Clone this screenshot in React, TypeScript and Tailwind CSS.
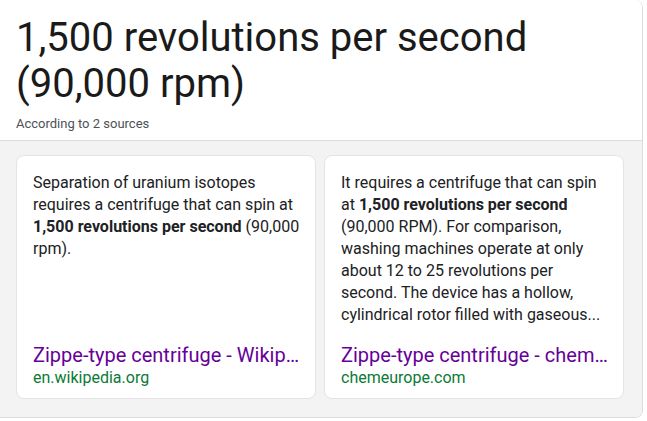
type Source = {
  id: string;
  before: string;
  bold: string;
  after: string;
  title: string;
  domain: string;
};

const sources: Source[] = [
  {
    id: "wiki",
    before: "Separation of uranium isotopes requires a centrifuge that can spin at ",
    bold: "1,500 revolutions per second",
    after: " (90,000 rpm).",
    title: "Zippe-type centrifuge - Wikipedia",
    domain: "en.wikipedia.org",
  },
  {
    id: "chem",
    before: "It requires a centrifuge that can spin at ",
    bold: "1,500 revolutions per second",
    after:
      " (90,000 RPM). For comparison, washing machines operate at only about 12 to 25 revolutions per second. The device has a hollow, cylindrical rotor filled with gaseous...",
    title: "Zippe-type centrifuge - chemeurope.com",
    domain: "chemeurope.com",
  },
];

function SourceCard({ source }: { source: Source }) {
  return (
    <a
      href="#"
      className="flex w-[300px] shrink-0 flex-col rounded-lg border border-[#e4e4e4] bg-white pb-[10px] pl-4 pr-3 pt-4"
    >
      <p className="text-[16px] leading-[22px] text-[#202124]">
        {source.before}
        <b className="font-bold">{source.bold}</b>
        {source.after}
      </p>
      <div className="mt-auto">
        <div className="truncate text-[20px] leading-[26px] text-[#660099]">{source.title}</div>
        <div className="text-[16px] leading-5 text-[#0a7a35]">{source.domain}</div>
      </div>
    </a>
  );
}

export default function App() {
  return (
    <div className="h-[421px] w-[647px] bg-white font-['Roboto',sans-serif]">
      <section className="w-[643px] overflow-hidden rounded-r-lg border-b border-r border-[#dcdcdc]">
        <header className="border-b border-[#dcdcdc] bg-white px-4 pb-[8px] pt-[15px]">
          <h1 className="text-[40px] leading-[46px] text-[#1a1a1a]">
            1,500 revolutions per second (90,000 rpm)
          </h1>
          <p className="mt-[9px] text-[13px] leading-4 text-[#4d5156]">According to 2 sources</p>
        </header>
        <div className="flex h-[276px] gap-2 bg-[#f3f3f3] px-4 pb-[18px] pt-[14px]">
          {sources.map((s) => (
            <SourceCard key={s.id} source={s} />
          ))}
        </div>
      </section>
    </div>
  );
}
